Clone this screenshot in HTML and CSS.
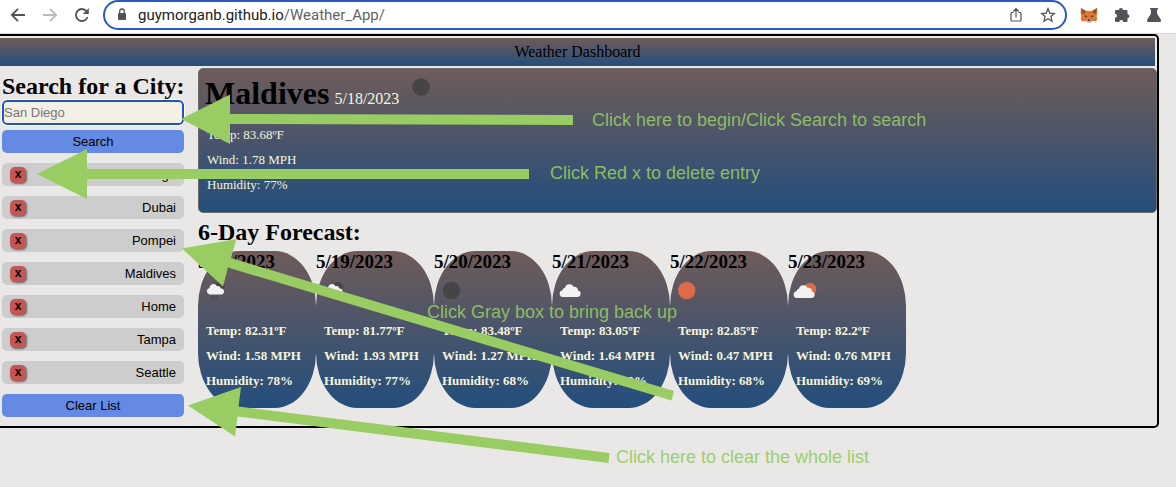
FILE: index.html
```html
<!DOCTYPE html>
<html lang="en">
<head>
<meta charset="utf-8">
<title>Weather Dashboard</title>
<link rel="stylesheet" href="styles.css">
</head>
<body>
<div class="toolbar">
  <button class="tool" aria-label="Back"><svg width="16" height="16" viewBox="0 0 16 16"><path d="M15 8H2M8 1.8 1.8 8 8 14.2" fill="none" stroke="#505357" stroke-width="1.8"/></svg></button>
  <button class="tool" aria-label="Forward"><svg width="16" height="16" viewBox="0 0 16 16"><path d="M1 8h13M8 1.8 14.2 8 8 14.2" fill="none" stroke="#b9bbbd" stroke-width="1.8"/></svg></button>
  <button class="tool" aria-label="Reload"><svg width="16" height="16" viewBox="0 0 16 16"><path d="M13.6 10A6 6 0 1 1 12.6 4.200" fill="none" stroke="#505357" stroke-width="1.8"/><path d="M14.800 1v6H8.800z" fill="#505357"/></svg></button>
  <div class="address">
    <svg width="10" height="13" viewBox="0 0 10 13"><rect x="1" y="5" width="8" height="7" rx="1" fill="#505357"/><path d="M2.700 5V3.300a2.300 2.300 0 0 1 4.600 0V5" fill="none" stroke="#505357" stroke-width="1.300"/></svg>
    <span class="url">guymorganb.github.io<span class="path">/Weather_App/</span></span>
    <button class="tool" aria-label="Share"><svg width="16" height="16" viewBox="0 0 16 16"><path d="M5.500 5.500H4a1 1 0 0 0-1 1V13a1 1 0 0 0 1 1h8a1 1 0 0 0 1-1V6.500a1 1 0 0 0-1-1h-1.500M8 10.500V2M5.300 4.500 8 1.700l2.700 2.800" fill="none" stroke="#505357" stroke-width="1.200"/></svg></button>
    <button class="tool" aria-label="Bookmark"><svg width="16" height="16" viewBox="0 0 16 16"><path d="m8 1.800 1.800 4.300 4.700.4-3.600 3.100 1.100 4.600L8 11.700l-4 2.500 1.100-4.600-3.600-3.100 4.700-.4z" fill="none" stroke="#505357" stroke-width="1.300"/></svg></button>
  </div>
  <button class="tool" aria-label="Wallet"><svg width="18" height="16" viewBox="0 0 18 16"><path d="M1 1l6 3h4l6-3 .5 5-.9 3 .7 3-1.300 2.500-3.500-.8-2 1.800h-3l-2-1.800-3.500.8L.7 12l.7-3L.5 6z" fill="#dd7732"/><path d="M1 1l5 4-3.500 2.500zM17 1l-5 4 3.500 2.500z" fill="#8c4f2a"/><path d="M5 8l2.500 2H5zM13 8l-2.500 2H13z" fill="#333b45"/><path d="M6.500 12.500h5l-1.500 3H8z" fill="#c9c1b9"/><path d="M7.500 12.500h3l-.8 1.500H8.300z" fill="#252525"/></svg></button>
  <button class="tool" aria-label="Extensions"><svg width="16" height="16" viewBox="0 0 16 16"><path d="M5 3a2 2 0 0 1 4 0h3.500a1 1 0 0 1 1 1v3.300a1.900 1.900 0 0 1 0 3.800V14a1 1 0 0 1-1 1H9.300a2 2 0 0 0-4 0H2a1 1 0 0 1-1-1v-3.200a2 2 0 0 0 0-4V4a1 1 0 0 1 1-1z" fill="#505357"/></svg></button>
  <button class="tool" aria-label="Labs"><svg width="16" height="16" viewBox="0 0 16 16"><path d="M4 1h8v1.500h-1V6.500l4 6.500q.4 1.800-1.200 2H2.200Q.6 14.800 1 13l4-6.500V2.500H4z" fill="#505357"/></svg></button>
</div>

<div class="app">
  <header class="banner">Weather Dashboard</header>
  <div class="layout">
    <aside class="sidebar">
      <h2><label for="city">Search for a City:</label></h2>
      <input id="city" class="city" type="text" placeholder="San Diego">
      <button class="action">Search</button>
      <ul class="history">
        <li><button class="remove" aria-label="Remove San Diego">x</button><button class="entry">San Diego</button></li>
        <li><button class="remove" aria-label="Remove Dubai">x</button><button class="entry">Dubai</button></li>
        <li><button class="remove" aria-label="Remove Pompei">x</button><button class="entry">Pompei</button></li>
        <li><button class="remove" aria-label="Remove Maldives">x</button><button class="entry">Maldives</button></li>
        <li><button class="remove" aria-label="Remove Home">x</button><button class="entry">Home</button></li>
        <li><button class="remove" aria-label="Remove Tampa">x</button><button class="entry">Tampa</button></li>
        <li><button class="remove" aria-label="Remove Seattle">x</button><button class="entry">Seattle</button></li>
      </ul>
      <button class="action">Clear List</button>
    </aside>
    <main>
      <section class="today">
        <div class="heading">
          <h1>Maldives</h1><span class="date">5/18/2023</span>
          <svg width="18" height="18" viewBox="0 0 18 18"><circle cx="9" cy="9" r="8.700" fill="#454546"/></svg>
        </div>
        <div class="readings"><p>Temp: 83.68ºF</p><p>Wind: 1.78 MPH</p><p>Humidity: 77%</p></div>
      </section>
      <h2 class="title">6-Day Forecast:</h2>
      <section class="forecast">
        <article class="day"><h3>5/18/2023</h3>
          <svg class="sky" width="28" height="24" viewBox="0 0 28 24"><circle cx="13.500" cy="8" r="5" fill="#454546"/><path d="M3.500 15.500a3.200 3.200 0 0 1 0-6.300 4 4 0 0 1 7.500-2 3.500 3.500 0 0 1 4 2.300 3 3 0 0 1 0 6z" fill="#f2f2f2"/><path d="M6 16.500l-1 1.500M9 16.500l-1 1.500M12 16.500l-1 1.500M7 18.800l-.5 1.200M10.500 18.800l-.5 1.200" stroke="#454546" stroke-width="1.200"/></svg>
          <div class="readings"><p>Temp: 82.31ºF</p><p>Wind: 1.58 MPH</p><p>Humidity: 78%</p></div></article>
        <article class="day"><h3>5/19/2023</h3>
          <svg class="sky" width="28" height="24" viewBox="0 0 28 24"><circle cx="14" cy="8" r="5" fill="#454546"/><path d="M4 15.500a3.200 3.200 0 0 1 0-6.300 4 4 0 0 1 7.500-2 3.500 3.500 0 0 1 4 2.300 3 3 0 0 1 0 6z" fill="#f2f2f2"/></svg>
          <div class="readings"><p>Temp: 81.77ºF</p><p>Wind: 1.93 MPH</p><p>Humidity: 77%</p></div></article>
        <article class="day"><h3>5/20/2023</h3>
          <svg class="sky" width="28" height="24" viewBox="0 0 28 24"><circle cx="9.500" cy="11.500" r="8.700" fill="#454546"/></svg>
          <div class="readings"><p>Temp: 83.48ºF</p><p>Wind: 1.27 MPH</p><p>Humidity: 68%</p></div></article>
        <article class="day"><h3>5/21/2023</h3>
          <svg class="sky" width="28" height="24" viewBox="0 0 28 24"><path d="M2.500 18a3.400 3.400 0 0 1 0-6.700 3 3 0 0 1 2.500-2.600 4.600 4.600 0 0 1 8.500-.9 3.600 3.600 0 0 1 4.500 3.700 3.300 3.300 0 0 1-.2 6.500z" fill="#f2f2f2"/></svg>
          <div class="readings"><p>Temp: 83.05ºF</p><p>Wind: 1.64 MPH</p><p>Humidity: 69%</p></div></article>
        <article class="day"><h3>5/22/2023</h3>
          <svg class="sky" width="28" height="24" viewBox="0 0 28 24"><circle cx="8.700" cy="11.500" r="8.700" fill="#dc6c49"/></svg>
          <div class="readings"><p>Temp: 82.85ºF</p><p>Wind: 0.47 MPH</p><p>Humidity: 68%</p></div></article>
        <article class="day"><h3>5/23/2023</h3>
          <svg class="sky" width="28" height="24" viewBox="0 0 28 24"><circle cx="14" cy="10" r="6.300" fill="#dc6c49"/><path d="M.5 19a3.400 3.400 0 0 1 0-6.700A3 3 0 0 1 3 9.700a4.600 4.600 0 0 1 8.500-.9 3.600 3.600 0 0 1 4.500 3.700 3.300 3.300 0 0 1-.2 6.500z" fill="#f2f2f2"/></svg>
          <div class="readings"><p>Temp: 82.2ºF</p><p>Wind: 0.76 MPH</p><p>Humidity: 69%</p></div></article>
      </section>
    </main>
  </div>
</div>

<div class="notes">
  <svg class="arrows" width="700" height="487" viewBox="0 0 700 487" fill="#9acc64">
    <path d="M181 119 230 94.500V114L573 115V125L230 124V144z"/>
    <path d="M37 174 87 149V169H529V179H87V199z"/>
    <path d="M182 248.500 236.500 239 231 258 674 391 671.500 400.500 228 267.500 223 286.500z"/>
    <path d="M188 405.500 241 387 238.500 406.500 609.500 453 608.500 463 237.500 416.500 235 436.500z"/>
  </svg>
  <p class="note begin">Click here to begin/Click Search to search</p>
  <p class="note delete">Click Red x to delete entry</p>
  <p class="note restore">Click Gray box to bring back up</p>
  <p class="note clear">Click here to clear the whole list</p>
</div>
</body>
</html>
```
FILE: styles.css
```css
* { box-sizing: border-box; }
body { margin: 0; background: #e9e8e6; font-family: "Liberation Serif", "Times New Roman", serif; color: #000; }
h1, h2, h3, p, ul { margin: 0; padding: 0; }
button { border: 0; padding: 0; font: 13px/15px "Liberation Sans", Arial, sans-serif; color: #000; }

.toolbar { display: flex; align-items: center; height: 34px; padding: 0 14px 4px 10px; gap: 16px; background: #fff; border-bottom: 1px solid #d5d5d5; }
.tool { display: flex; background: none; }
.toolbar > .address { flex: 1; margin: 0 -3px; }
.address { display: flex; align-items: center; gap: 16px; height: 30px; padding: 0 9px 0 12px; border: 2px solid #2a59c3; border-radius: 15px; }
.url { flex: 1; margin-left: -5px; font: 15px/20px Roboto, sans-serif; color: #202124; }
.path { color: #5f6368; }

.app { margin-right: 17px; padding-top: 2px; border: 2px solid #000; border-left: 0; border-radius: 0 5px 5px 0; }
.banner { height: 28px; margin-right: 2px; font-size: 16px; line-height: 28px; text-align: center; background: linear-gradient(#6f5b59, #234e7c); }
.layout { display: grid; grid-template-columns: 182px 1fr; gap: 14px; padding: 2px 0 9px 2px; }

h2 { font-size: 24px; line-height: 28px; white-space: nowrap; }
.sidebar { display: flex; flex-direction: column; padding-top: 4px; }
.city { width: 100%; height: 25px; margin-bottom: 5px; padding: 0; border: 2px solid #1f55bd; border-radius: 5px; outline: 1px solid #fff; background: #f5f0e5; font: 13px/15px "Liberation Sans", Arial, sans-serif; }
.city::placeholder { color: #757575; }
.action { height: 23px; border-radius: 5px; background: #658ae3; }
.history { display: flex; flex-direction: column; gap: 10px; margin: 10px 0; list-style: none; }
.history li { display: flex; align-items: center; height: 23px; padding: 0 8px; border-radius: 5px; background: #cdcdcd; }
.remove { width: 16px; height: 16px; border-radius: 5px; background: #c45654; box-shadow: 1px 1px 2px #666; font-weight: bold; font-size: 12px; }
.entry { flex: 1; text-align: right; background: none; }

.today { height: 145px; padding: 6px; border: 1px solid #6b6b6b; border-radius: 5px; background: linear-gradient(#6f5b59, #234e7c); }
.heading { display: flex; align-items: baseline; gap: 5px; }
.heading svg { align-self: flex-start; margin: 3px 8px; }
h1 { font-size: 32px; line-height: 37px; }
.date { font-size: 16px; color: beige; }
.readings { display: grid; gap: 10px; font-size: 13px; line-height: 15px; color: beige; }
.today .readings { margin: 15px 2px; }
.title { margin-top: 5px; }
.forecast { display: flex; margin-top: 5px; }
.day { width: 118px; height: 157px; border-radius: 35%; background: linear-gradient(#6f5b59, #234e7c); }
h3 { font-size: 19px; line-height: 22px; }
.sky { display: block; margin: 6px 8px 20px; overflow: visible; }
.day .readings { padding-left: 8px; font-weight: bold; white-space: nowrap; }

/* Tutorial overlay drawn above the dashboard */
.notes { position: absolute; inset: 0; overflow: hidden; pointer-events: none; }
.arrows { position: absolute; left: 0; top: 0; }
.note { position: absolute; font: 18px/20px "Liberation Sans", Arial, sans-serif; color: #8cbd62; white-space: nowrap; }
.begin { left: 592px; top: 110px; }
.delete { left: 550px; top: 163px; }
.restore { left: 427px; top: 302px; }
.clear { left: 616px; top: 447px; color: #9dce6c; }
```
